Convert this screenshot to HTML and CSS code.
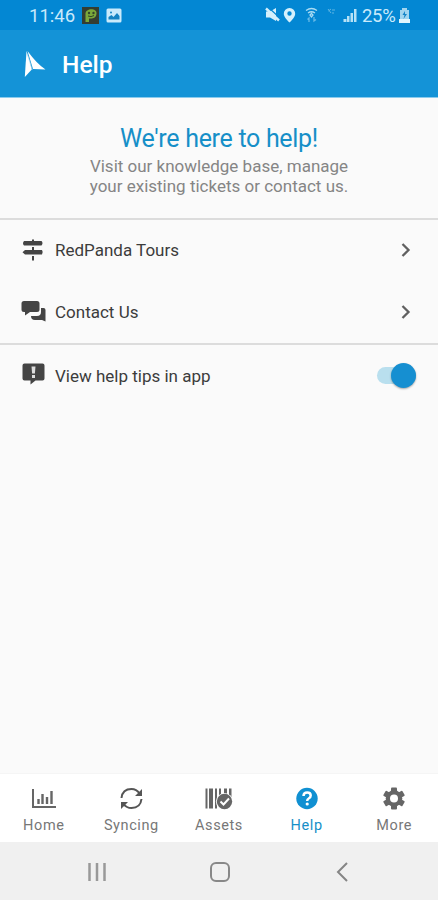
FILE: index.html
```html
<!DOCTYPE html>
<html lang="en">
<head>
<meta charset="utf-8">
<title>Help</title>
<link rel="stylesheet" href="styles.css">
</head>
<body>
<div class="screen">
  <div class="status">
    <span class="time">11:46</span>
    <svg class="app-icon" width="17" height="17" viewBox="0 0 17 17"><rect width="17" height="17" fill="#343d32"/><path d="M3.500 15V7c0-6 11-6 11-1 0 5-4 6-7.500 5.500V15z" fill="#7aa83a"/><circle cx="7" cy="6" r="1.200" fill="#34452b"/><circle cx="11.500" cy="6" r="1.200" fill="#34452b"/><path d="M6 9q3 1.500 6-.5" stroke="#34452b" fill="none"/></svg>
    <svg class="photo" width="16" height="15" viewBox="0 0 16 15"><rect x=".5" y=".5" width="15" height="14" rx="1.500" fill="#c9eafb"/><path d="M2.500 11.500V9l3-2 2 2 3.500-4 2.500 3v3.500z" fill="#1583c2"/><circle cx="5" cy="4.500" r="1" fill="#1583c2"/></svg>
    <svg class="signals" width="94" height="18" viewBox="0 0 94 18">
      <path d="M1 4.500h4L11 1v13l-6-3.500H1z" fill="#d5f0fc"/><path d="M3 0l13 12" stroke="#0787d2" stroke-width="1.200"/><path d="M1 1.500l13 12" stroke="#d5f0fc" stroke-width="2.400"/>
      <path d="M24.500 1a5.700 5.700 0 0 0-5.700 6c0 3.500 5.700 8.500 5.700 8.500s5.700-5 5.700-8.500a5.700 5.700 0 0 0-5.700-6zm0 3.300a2.200 2.200 0 1 1 0 4.400 2.200 2.200 0 0 1 0-4.400z" fill="#d5f0fc"/>
      <g fill="none" stroke="#a9dbf3" stroke-width="1.300"><path d="M41 3.500q5.500-4 11 0M43 6q3.500-2.500 7 0M45 8l1.500-1.500L48 8l-1.500 2z"/><path d="M44 15v-4l-1.500 1.500M49 10v4l2-1.500" opacity=".6"/></g>
      <path d="M63 2l3 4M66 2l-2.500 2M67 3h3M67 6h2" stroke="#5fb5e2" fill="none"/>
      <path d="M78.500 12h3v3h-3zM82 9h2.500v6H82zM85.500 6H88v9h-2.500zM89 2h2.500v13H89z" fill="#b5e1f6"/>
    </svg>
    <span class="percent">25%</span>
    <svg class="battery" width="11" height="16" viewBox="0 0 11 16"><path d="M3 0h5v2h2v9H1V2h2z" fill="#a1d5ef"/><path d="M0 11h11v4H0z" fill="#e0f5fd"/><path d="M6 3L3.500 7h2L4.500 11 8 6H6z" fill="#1484c7"/></svg>
  </div>
  <header class="header">
    <svg width="22" height="28" viewBox="0 0 22 28"><path d="M2.500 1L.8 27l7-7.500L6 12z" fill="#fff"/><path d="M3.500 1l5.500 18 12.500.5Q13 14 3.500 1z" fill="#fff"/><path d="M3.300 4l5 16" stroke="#9dd3ee" stroke-width=".6"/></svg>
    <h1>Help</h1>
  </header>
  <main>
    <section class="intro">
      <h2>We're here to help!</h2>
      <p>Visit our knowledge base, manage<br>your existing tickets or contact us.</p>
    </section>
    <div class="row">
      <svg class="lead" width="26" height="24" viewBox="0 0 26 24"><g fill="#444"><path d="M3 3h17.500q2 2.200 0 4.500H3q-2-2.200 0-4.500zM4 12h17q1.500 2.200 0 4.500H4l-2.500-2.200z"/><path d="M11 1.500h2V4h-2zM11 9h2v4h-2zM11 18h2v4.500h-2z"/></g></svg>
      <span>RedPanda Tours</span>
      <svg class="chev" width="12" height="16" viewBox="0 0 12 16"><path d="M2.500 2l6 6-6 6"/></svg>
    </div>
    <div class="row">
      <svg class="lead" width="26" height="24" viewBox="0 0 26 24"><path d="M10 16h6q4 0 4-4V8h2.500q2 0 2 2v11.500L21 20h-7q-4 0-4-4z" fill="#444"/><path d="M3 1h13q2.500 0 2.500 2.500v6q0 2.500-2.500 2.500H9l-5 3.500V12H3Q.5 12 .5 9.500v-6Q.5 1 3 1z" fill="#444"/></svg>
      <span>Contact Us</span>
      <svg class="chev" width="12" height="16" viewBox="0 0 12 16"><path d="M2.500 2l6 6-6 6"/></svg>
    </div>
    <div class="row tips">
      <svg class="lead" width="26" height="24" viewBox="0 0 26 24"><path d="M3.500 1.500h18q2 0 2 2v13q0 2-2 2h-7l-5 4v-4h-6q-2 0-2-2v-13q0-2 2-2z" fill="#444"/><path d="M10.500 4.500h4l-.6 7h-2.800zM11 13h3v3h-3z" fill="#ddd"/></svg>
      <span>View help tips in app</span>
      <span class="switch"><span class="knob"></span></span>
    </div>
  </main>
  <nav class="tabs">
    <div class="tab"><svg width="26" height="24" viewBox="0 0 26 24"><g fill="none" stroke="#666"><path d="M2 2v18h23" stroke-width="2"/><path d="M7.500 12v5M11.500 7v10M16 10v7M20.500 4v13" stroke-width="2.400"/></g></svg><span>Home</span></div>
    <div class="tab"><svg width="26" height="24" viewBox="0 0 26 24"><g fill="none" stroke="#555" stroke-width="2"><path d="M3.500 11q1-9 10-9 5 0 8 4.500M23.500 12q-1 9-10 9-5 0-8-4"/></g><path d="M24 2v7h-7zM3 22v-7h7z" fill="#555"/></svg><span>Syncing</span></div>
    <div class="tab"><svg width="30" height="24" viewBox="0 0 30 24"><g fill="#666"><path d="M1.500 1.500h2v20h-2zM5 1.500h4v20H5zM11 1.500h2v20h-2zM15 1.500h2v9h-2zM20 1.500h3v6h-3zM25 1.500h2.500v9H25z"/><circle cx="20.500" cy="14.500" r="8.600" fill="#fff"/><circle cx="20.500" cy="14.500" r="7.700"/></g><path d="M16.500 14.500l3 3 5.500-6" fill="none" stroke="#fff" stroke-width="2"/></svg><span>Assets</span></div>
    <div class="tab active"><svg width="26" height="24" viewBox="0 0 26 24"><circle cx="13" cy="11.500" r="10.700" fill="#1090d2"/><path d="M9.500 9q0-3.500 3.700-3.500 3.500 0 3.500 3 0 2-2 3-1.500.8-1.500 2.500" fill="none" stroke="#fff" stroke-width="2.500"/><circle cx="13.200" cy="17" r="1.600" fill="#fff"/></svg><span>Help</span></div>
    <div class="tab"><svg width="26" height="24" viewBox="0 0 26 24"><g fill="#666"><circle cx="13" cy="11.500" r="8.300"/><rect x="10" y=".5" width="6" height="22" rx="1"/><rect x="10" y=".5" width="6" height="22" rx="1" transform="rotate(60 13 11.500)"/><rect x="10" y=".5" width="6" height="22" rx="1" transform="rotate(120 13 11.500)"/></g><circle cx="13" cy="11.500" r="4" fill="#fff"/></svg><span>More</span></div>
  </nav>
  <div class="system">
    <svg width="20" height="20" viewBox="0 0 20 20"><path d="M2.500 1v18M10 1v18M17.500 1v18" stroke="#999" stroke-width="2.500"/></svg>
    <svg width="20" height="20" viewBox="0 0 20 20"><rect x="1" y="1" width="18" height="18" rx="5" fill="none" stroke="#888" stroke-width="2"/></svg>
    <svg width="20" height="20" viewBox="0 0 20 20"><path d="M14 1L5 10l9 9" fill="none" stroke="#858585" stroke-width="2"/></svg>
  </div>
</div>
</body>
</html>
```
FILE: styles.css
```css
* { box-sizing: border-box; }
body { margin: 0; font-family: Roboto, sans-serif; }
.screen { width: 438px; height: 900px; display: flex; flex-direction: column; background: #fafafa; overflow: hidden; }
svg { display: block; flex: none; }
.status { height: 30px; background: #0387d3; display: flex; align-items: center; padding: 1px 0 0 29px; color: #c9eafb; font-size: 18.500px; }
.time { width: 53px; }
.photo { margin-left: 7px; }
.signals { margin-left: 143px; }
.percent { margin-left: 3px; width: 34px; letter-spacing: -.3px; }
.battery { margin-left: 3px; }
.header { height: 68px; background: #1493d7; border-bottom: 1px solid #8bcbed; display: flex; align-items: center; padding-left: 24px; }
h1 { margin: 2px 0 0 16px; color: #fff; font-size: 24.500px; font-weight: 500; }
main { flex: 1; }
.intro { height: 122px; padding-top: 25px; text-align: center; border-bottom: 2px solid #dcdcdc; }
h2 { margin: 0; color: #168fc8; font-size: 25px; line-height: 32px; font-weight: 400; letter-spacing: -.3px; }
p { margin: 0; color: #858585; font-size: 17px; line-height: 20px; padding-top: 1px; }
.row { height: 62px; display: flex; align-items: center; padding: 0 26px 3px 21px; color: #3c3c3c; font-size: 17px; }
.row > span:nth-child(2) { flex: 1; margin-left: 8px; }
.chev { fill: none; stroke: #606060; stroke-width: 2.300; }
.tips { border-top: 2px solid #dcdcdc; height: 64px; padding: 0 22px 1px 21px; margin-top: -1px; }
.tips .lead { margin-top: -4px; }
.switch { width: 39px; height: 17px; border-radius: 9px; background: #b9dfee; display: flex; align-items: center; justify-content: flex-end; }
.knob { width: 25px; height: 25px; border-radius: 50%; background: #168fd1; box-shadow: 0 1px 2px #0005; }
.tabs { height: 69px; display: grid; grid-template-columns: repeat(5, 1fr); background: #fff; border-top: 1px solid #f5f5f5; }
.tab { display: flex; flex-direction: column; align-items: center; padding-top: 13px; color: #777; font-size: 14.500px; line-height: 18px; letter-spacing: .6px; }
.tab span { margin-top: 6px; }
.active { color: #168fc8; }
.system { height: 58px; background: #f0f0f0; display: flex; align-items: center; justify-content: space-between; padding: 1px 85px 0 87px; }
```
